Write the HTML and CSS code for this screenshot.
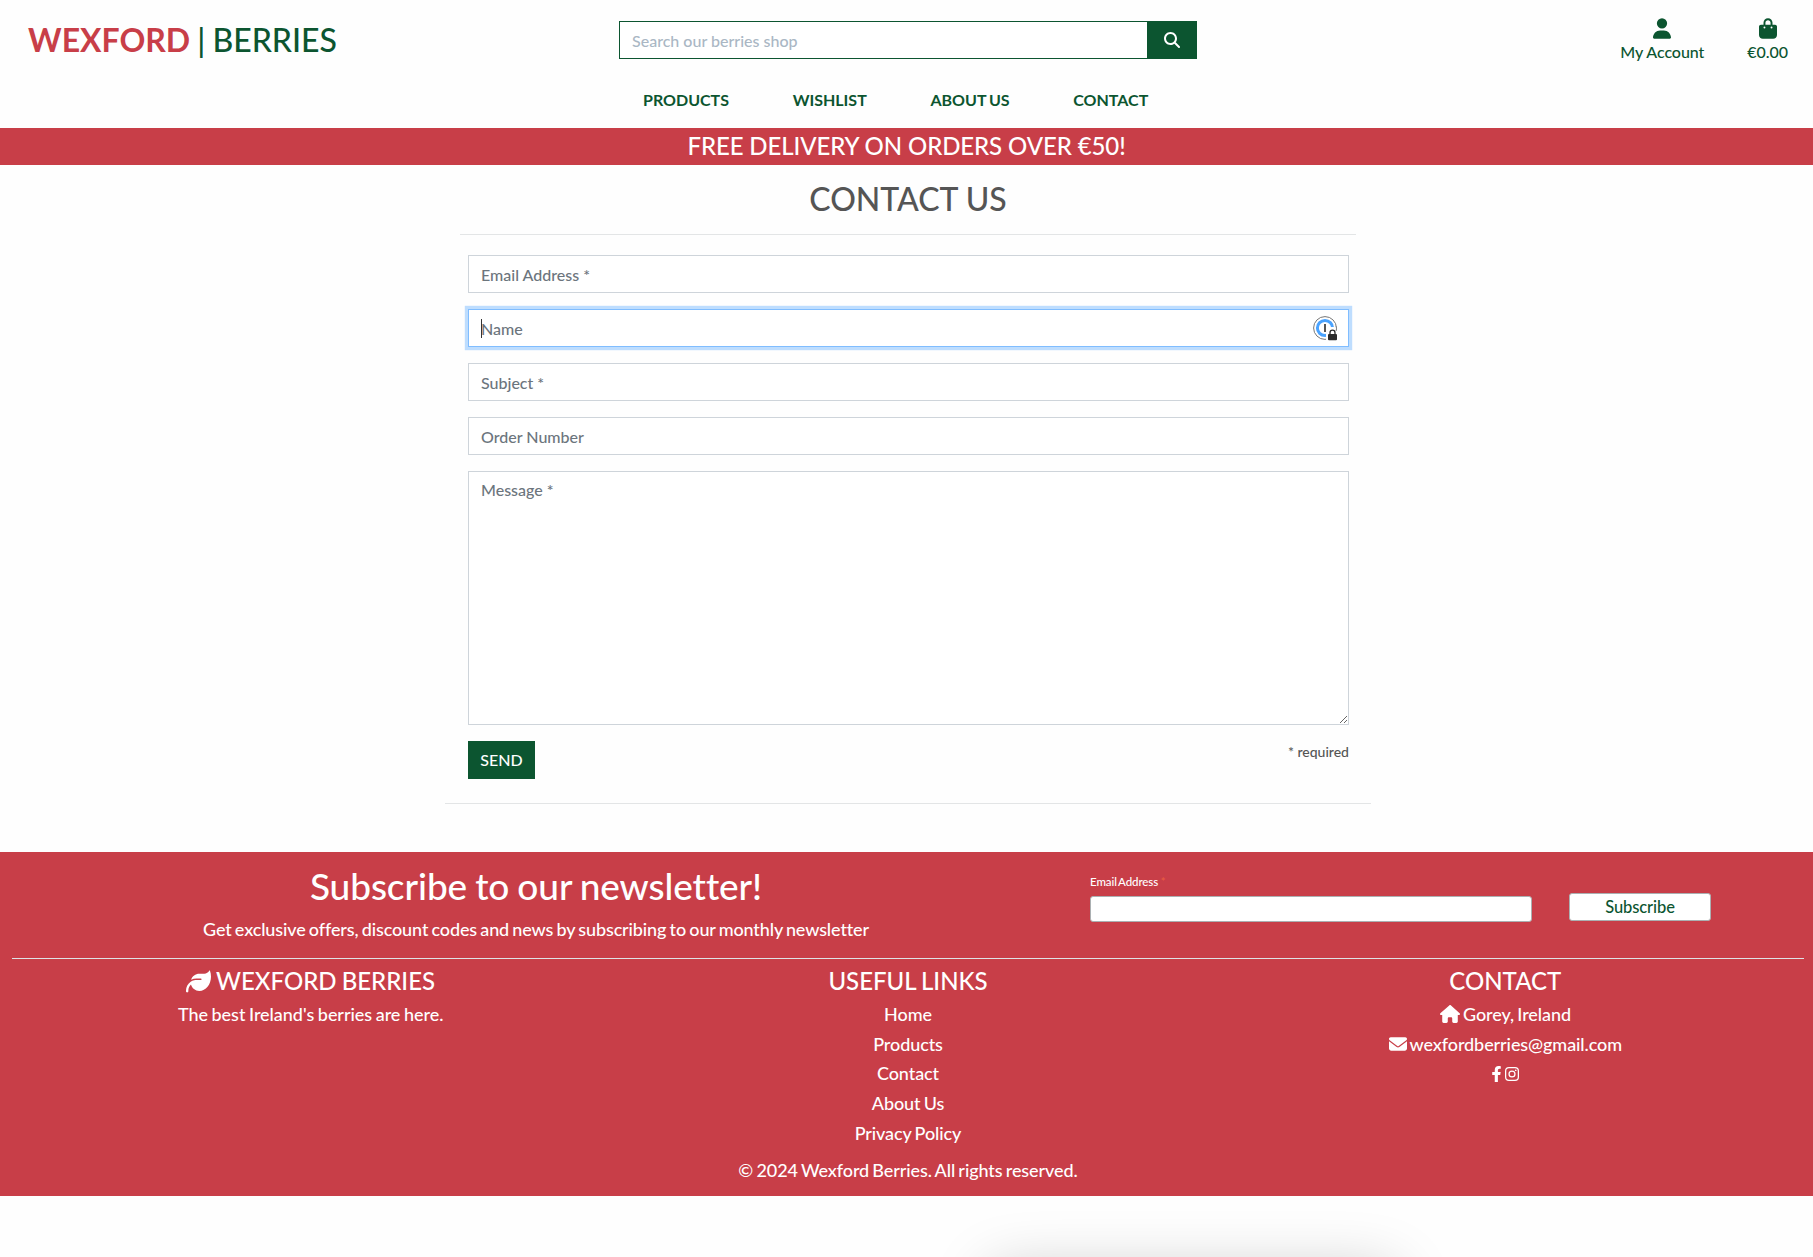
FILE: index.html
```html
<!DOCTYPE html>
<html lang="en">
<head>
<meta charset="utf-8">
<title>Wexford Berries | Contact</title>
<link rel="stylesheet" href="styles.css">
</head>
<body>
<header class="header">
  <div class="topbar">
    <a class="logo" href="#"><strong>WEXFORD</strong> | BERRIES</a>
    <form class="search">
      <input class="search-input" type="text" placeholder="Search our berries shop">
      <button class="search-button" type="button" aria-label="Search"><svg viewBox="0 0 512 512"><path d="M416 208c0 45.9-14.9 88.3-40 122.7L502.6 457.4c12.5 12.5 12.5 32.8 0 45.3s-32.8 12.5-45.3 0L330.7 376c-34.4 25.2-76.8 40-122.7 40C93.1 416 0 322.9 0 208S93.1 0 208 0S416 93.1 416 208zM208 352a144 144 0 1 0 0-288 144 144 0 1 0 0 288z"/></svg></button>
    </form>
    <div class="account">
      <a class="account-link" href="#"><svg viewBox="0 0 448 512"><path d="M224 256A128 128 0 1 0 224 0a128 128 0 1 0 0 256zm-45.7 48C79.8 304 0 383.8 0 482.3C0 498.7 13.3 512 29.7 512H418.3c16.4 0 29.7-13.3 29.7-29.7C448 383.8 368.2 304 269.7 304H178.3z"/></svg><span>My Account</span></a>
      <a class="account-link" href="#"><svg viewBox="0 0 448 512"><path d="M160 112c0-35.3 28.7-64 64-64s64 28.7 64 64v48H160V112zm-48 48H48c-26.5 0-48 21.5-48 48V416c0 53 43 96 96 96H352c53 0 96-43 96-96V208c0-26.5-21.5-48-48-48H336V112C336 50.1 285.9 0 224 0S112 50.1 112 112v48zm24 48a24 24 0 1 1 0 48 24 24 0 1 1 0-48zm152 24a24 24 0 1 1 48 0 24 24 0 1 1 -48 0z"/></svg><span>€0.00</span></a>
    </div>
  </div>
  <nav class="nav">
    <a href="#">PRODUCTS</a>
    <a href="#">WISHLIST</a>
    <a href="#">ABOUT US</a>
    <a href="#">CONTACT</a>
  </nav>
</header>
<div class="banner">FREE DELIVERY ON ORDERS OVER €50!</div>
<main class="main">
  <h1 class="title">CONTACT US</h1>
  <form class="contact-form">
    <input class="field" type="text" placeholder="Email Address *">
    <div class="field-wrap">
      <input class="field field-active" type="text" placeholder="Name">
      <span class="caret"></span>
      <svg class="key-icon" viewBox="0 0 26 26">
        <circle cx="12" cy="12" r="11.4" fill="#fff" stroke="#777" stroke-width="1"/>
        <circle cx="12" cy="12" r="7.6" fill="#fff" stroke="#4aa3ff" stroke-width="3"/>
        <path d="M12 8v8" stroke="#555" stroke-width="2"/>
        <path d="M13 25V16q0-5 5.500-5H25V25z" fill="#fff"/>
        <path d="M23.300 10.500q.5 2.500-.2 4.500" fill="none" stroke="#777"/>
        <rect x="15" y="18" width="9" height="6.200" rx="1" fill="#2b2b2b"/>
        <path d="M17 18.500v-1.800a2.500 2.500 0 0 1 5 0v1.800" fill="none" stroke="#2b2b2b" stroke-width="1.300"/>
      </svg>
    </div>
    <input class="field" type="text" placeholder="Subject *">
    <input class="field" type="text" placeholder="Order Number">
    <textarea class="field message" placeholder="Message *"></textarea>
    <div class="form-end">
      <button class="send" type="button">SEND</button>
      <span class="required">* required</span>
    </div>
  </form>
</main>
<footer class="footer">
  <section class="newsletter">
    <div class="newsletter-copy">
      <h2>Subscribe to our newsletter!</h2>
      <p>Get exclusive offers, discount codes and news by subscribing to our monthly newsletter</p>
    </div>
    <form class="newsletter-form">
      <div class="newsletter-field">
        <label for="news-email">Email Address <span class="asterisk">*</span></label>
        <input id="news-email" type="text">
      </div>
      <button class="subscribe" type="button">Subscribe</button>
    </form>
  </section>
  <div class="columns">
    <section class="column">
      <h3><svg class="leaf" viewBox="0 0 512 512"><path d="M272 96c-78.6 0-145.1 51.5-167.7 122.5c33.6-17 71.5-26.5 111.7-26.5h88c8.8 0 16 7.2 16 16s-7.2 16-16 16H288 216s0 0 0 0c-16.6 0-32.7 1.9-48.3 5.4c-25.9 5.9-49.9 16.4-71.4 30.7c0 0 0 0 0 0C38.3 298.8 0 364.9 0 440v16c0 13.3 10.7 24 24 24s24-10.7 24-24V440c0-48.7 20.7-92.5 53.8-123.2C121.6 392.3 190.3 448 272 448l1 0c132.1-.7 239-130.9 239-291.4c0-42.6-7.5-83.1-21.1-119.6c-2.6-6.9-12.7-6.6-16.2-.1C455.9 72.1 418.7 96 376 96L272 96z"/></svg> WEXFORD BERRIES</h3>
      <p class="tagline">The best Ireland's berries are here.</p>
    </section>
    <section class="column">
      <h3>USEFUL LINKS</h3>
      <a href="#">Home</a>
      <a href="#">Products</a>
      <a href="#">Contact</a>
      <a href="#">About Us</a>
      <a href="#">Privacy Policy</a>
    </section>
    <section class="column">
      <h3>CONTACT</h3>
      <p><svg class="house" viewBox="0 0 576 512"><path d="M575.8 255.5c0 18-15 32.100-32 32.100h-32l.7 160.200c0 2.700-.2 5.400-.5 8.100V472c0 22.100-17.900 40-40 40H456c-1.100 0-2.200 0-3.300-.1c-1.400 .1-2.800 .1-4.200 .1H416 392c-22.100 0-40-17.900-40-40V448 384c0-17.700-14.300-32-32-32H256c-17.700 0-32 14.300-32 32v64 24c0 22.100-17.900 40-40 40H160 128.100c-1.500 0-3-.1-4.500-.2c-1.200 .1-2.400 .2-3.600 .2H104c-22.100 0-40-17.900-40-40V360c0-.9 0-1.900 .1-2.800V287.600H32c-18 0-32-14-32-32.100c0-9 3-17 10-24L266.400 8c7-7 15-8 22-8s15 2 21 7L564.800 231.500c8 7 12 15 11 24z"/></svg> Gorey, Ireland</p>
      <p><svg class="envelope" viewBox="0 0 512 512"><path d="M48 64C21.5 64 0 85.5 0 112c0 15.1 7.1 29.3 19.2 38.4L236.8 313.6c11.4 8.5 27 8.5 38.4 0L492.8 150.4c12.1-9.1 19.2-23.3 19.2-38.4c0-26.5-21.500-48-48-48H48zM0 176V384c0 35.3 28.7 64 64 64H448c35.3 0 64-28.7 64-64V176L294.4 339.2c-22.8 17.1-54 17.1-76.800 0L0 176z"/></svg> wexfordberries@gmail.com</p>
      <p class="social"><svg class="facebook" viewBox="0 0 320 512"><path d="M279.14 288l14.22-92.66h-88.91v-60.13c0-25.35 12.42-50.06 52.24-50.06h40.42V6.26S260.43 0 225.36 0c-73.22 0-121.08 44.38-121.08 124.72v70.62H22.89V288h81.39v224h100.17V288z"/></svg><svg class="instagram" viewBox="0 0 448 512"><rect x="20" y="52" width="408" height="408" rx="108" fill="none" stroke="#fff" stroke-width="40"/><circle cx="224" cy="256" r="95" fill="none" stroke="#fff" stroke-width="40"/><circle cx="343.600" cy="136.300" r="26.800"/></svg></p>
    </section>
  </div>
  <p class="copyright">© 2024 Wexford Berries. All rights reserved.</p>
</footer>
<div class="dock-area"><div class="dock-shadow"></div></div>
</body>
</html>
```
FILE: styles.css
```css
*, *::before, *::after { box-sizing: border-box; }
body {
  margin: 0;
  height: 1257px;
  overflow: hidden;
  display: flex;
  flex-direction: column;
  background: #fefefe;
  color: #555;
  font: 500 16px/24px Lato, "Liberation Sans", sans-serif;
  font-variant-ligatures: none;
}
h1, h2, h3, p { margin: 0; font-weight: 500; }
a { color: inherit; text-decoration: none; }
svg { fill: currentColor; }
input, button, textarea { font: inherit; border-radius: 0; margin: 0; }

.header { height: 128px; color: #0c5530; }
.topbar {
  display: grid;
  grid-template-columns: 619px 578px 1fr;
  align-items: start;
  height: 80px;
}
.logo { padding: 20px 0 0 28px; font-size: 32px; line-height: 39px; font-weight: 500; word-spacing: -1px; }
.logo strong { color: #c83e48; font-weight: 700; }
.search { display: flex; height: 38px; margin-top: 21px; }
.search-input {
  flex: 1;
  min-width: 0;
  border: 1px solid #0c5530;
  border-right: 0;
  padding: 1px 12px 0;
  background: #fff;
}
.search-input::placeholder { color: #aab7c4; opacity: 1; }
.search-button {
  display: grid;
  place-items: center;
  width: 50px;
  padding: 0;
  border: 0;
  background: #0c5530;
  color: #fff;
}
.search-button svg { width: 16px; height: 16px; }
.account { display: flex; justify-content: flex-end; gap: 43px; padding: 18px 25px 0 0; }
.account-link { display: flex; flex-direction: column; align-items: center; }
.account-link svg { width: 18px; height: 21px; }
.account-link span { margin-top: 1px; letter-spacing: -.05px; }
.nav { display: flex; gap: 63.700px; padding: 8px 0 0 643px; font-weight: 700; word-spacing: -1px; }

.banner {
  height: 37px;
  background: #c83e48;
  color: #fff;
  text-align: center;
  font-size: 24px;
  line-height: 36px;
  letter-spacing: -.1px;
}

.main {
  width: 926px;
  height: 639px;
  margin: 0 0 48px 445px;
  padding: 0 15px;
  border-bottom: 1px solid #e3e5e6;
}
.title {
  height: 70px;
  border-bottom: 1px solid #e3e5e6;
  text-align: center;
  font-size: 32px;
  line-height: 67px;
}
.contact-form { display: flex; flex-direction: column; gap: 16px; padding: 20px 7px 0 8px; }
.field {
  display: block;
  width: 100%;
  height: 38px;
  border: 1px solid #ced4da;
  padding: 1px 12px 0;
  background: #fff;
}
.field::placeholder { color: #6c757d; opacity: 1; }
.field-wrap { position: relative; }
.field-active { border-color: #80bdff; box-shadow: 0 0 0 3.200px rgba(0, 123, 255, .25); }
.caret { position: absolute; left: 13px; top: 10px; width: 1px; height: 19px; background: #333; }
.key-icon { position: absolute; right: 10px; top: 7px; width: 26px; height: 26px; }
.message { height: 254px; padding-top: 6px; resize: vertical; }
.form-end { display: flex; justify-content: space-between; align-items: flex-start; }
.send { width: 67px; height: 38px; padding: 0; border: 0; background: #0c5530; color: #fff; }
.required { font-size: 14px; line-height: 22px; }

.footer { height: 344px; flex: none; padding: 0 9px 0 12px; background: #c83e48; color: #fff; font-size: 18px; letter-spacing: -.09px; word-spacing: -1.200px; }
.newsletter { display: grid; grid-template-columns: 1078px 1fr; height: 107px; border-bottom: 1px solid #dee2e6; }
.newsletter-copy { width: 1048px; text-align: center; }
.newsletter h2 { font-size: 37px; line-height: 46px; margin-top: 11px; }
.newsletter p { line-height: 27px; margin-top: 7px; letter-spacing: -.12px; }
.newsletter-form { display: flex; align-items: flex-start; gap: 37px; }
.newsletter-field { display: flex; flex-direction: column; width: 442px; padding-top: 21px; }
.newsletter-field label { font-size: 11.500px; line-height: 18px; }
.asterisk { margin-left: 1px; color: #e85c41; }
.newsletter-field input { height: 26px; margin-top: 5px; border: 1px solid #abb0b2; border-radius: 3px; background: #fff; }
.subscribe { width: 142px; height: 28px; margin-top: 41px; padding: 0; border: 1px solid #abb0b2; border-radius: 3px; background: #fff; color: #0c5530; font-size: 16.500px; letter-spacing: -.1px; }
.columns { display: grid; grid-template-columns: repeat(3, 1fr); height: 197px; text-align: center; }
.column { display: flex; flex-direction: column; }
.column h3 { height: 41px; font-size: 24px; line-height: 44px; letter-spacing: 0; word-spacing: -1px; }
.column p, .column a { height: 29.700px; line-height: 29.700px; }
.column .tagline { letter-spacing: -.04px; word-spacing: -.9px; }
.leaf { width: 25px; height: 25px; vertical-align: -4px; }
.house { width: 20px; height: 18px; vertical-align: -2px; }
.envelope { width: 18px; height: 18px; vertical-align: -2px; }
.social { display: flex; justify-content: center; align-items: center; gap: 3px; }
.facebook { width: 11px; height: 16px; }
.instagram { width: 14px; height: 16px; }
.copyright { text-align: center; line-height: 28px; }

.dock-area { position: relative; flex: 1; overflow: hidden; }
.dock-shadow { position: absolute; left: 990px; top: 75px; width: 405px; height: 60px; border-radius: 12px; box-shadow: 0 0 60px rgba(0, 0, 0, .22); }
```
